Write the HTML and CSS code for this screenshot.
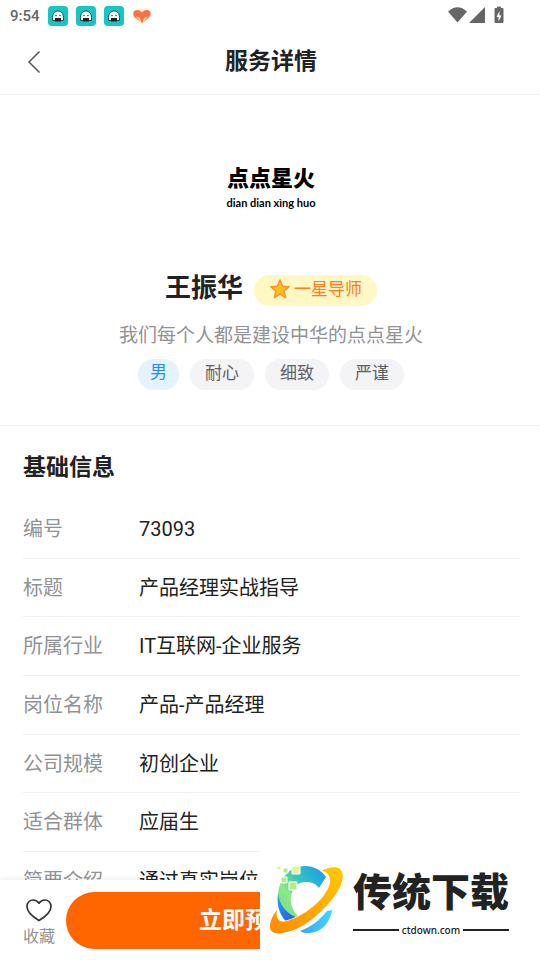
FILE: index.html
```html
<!DOCTYPE html>
<html lang="zh-CN">
<head>
<meta charset="utf-8">
<meta name="viewport" content="width=device-width, initial-scale=1">
<title>服务详情</title>
<link rel="stylesheet" href="styles.css">
</head>
<body>
<svg width="0" height="0" class="defs" aria-hidden="true">
  <symbol id="ghost" viewBox="0 0 20 20">
    <rect width="20" height="20" rx="4" fill="#18c5c5"/>
    <path d="M4.500 14.500V11.500C4.500 7.500 7 5 10 5s5.500 2.500 5.500 6.500v3z" fill="#fff" stroke="#173d40" stroke-width=".9"/>
    <circle cx="8" cy="9.500" r=".7" fill="#222"/><circle cx="12" cy="9.500" r=".7" fill="#222"/>
    <path d="M7 12h6v3.500H7z" fill="#222"/>
  </symbol>
</svg>
<div class="app">
  <div class="status">
    <span class="time">9:54</span>
    <svg class="app-icon"><use href="#ghost"/></svg>
    <svg class="app-icon"><use href="#ghost"/></svg>
    <svg class="app-icon"><use href="#ghost"/></svg>
    <svg class="app-icon" viewBox="0 0 20 20">
      <circle cx="10" cy="10" r="8" fill="#fff3df"/>
      <path d="M10 17L3 11.500C0 8.500 1 4 5 4c2.500 0 4 1 5 2.500C11 5 12.500 4 15 4c4 0 5 4.500 2 7.500z" fill="#ff7043"/>
      <path d="M9 17.500L8 14 4.500 11M11 17.500l1-3.500 3.500-3M8 14l-1.500-3M12 14l1.500-3" fill="none" stroke="#fff3df" stroke-width="1"/>
    </svg>
    <svg class="system" viewBox="0 0 58 20" aria-label="网络与电量">
      <path d="M0 5.500Q9.500-3 19 5.500L9.500 16.500z" fill="#666"/>
      <path d="M37 1v16H21z" fill="#666"/>
      <path d="M47 2.500h2.500V1h3v1.500H55v14h-8z" fill="#666" stroke="#666" stroke-linejoin="round"/>
      <path d="M51.500 5l-3 6h2v4.500l3-6h-2z" fill="#fff"/>
    </svg>
  </div>
  <header class="nav">
    <button class="back" aria-label="返回">
      <svg width="14" height="24" viewBox="0 0 14 24"><path d="M12.500 1.500L2 12l10.500 10.500" fill="none" stroke="#555" stroke-width="1.500"/></svg>
    </button>
    <h1 class="title">服务详情</h1>
  </header>
  <main class="content">
    <section class="profile">
      <div class="avatar">
        <span class="avatar-name">点点星火</span>
        <span class="avatar-pinyin">dian dian xìng huo</span>
      </div>
      <div class="identity">
        <h2 class="name">王振华</h2>
        <span class="badge">
          <svg width="20" height="20" viewBox="0 0 20 20"><path d="M10 1l2.500 6.300 6.700.4-5.200 4.300 1.700 6.600L10 14.900l-5.700 3.700L6 12 .8 7.700l6.700-.4z" fill="#ffc01e" stroke="#f7922d" stroke-width="1.500" stroke-linejoin="round"/></svg>
          一星导师
        </span>
      </div>
      <p class="motto">我们每个人都是建设中华的点点星火</p>
      <div class="tags">
        <span class="tag tag-gender">男</span>
        <span class="tag">耐心</span>
        <span class="tag">细致</span>
        <span class="tag">严谨</span>
      </div>
    </section>
    <section class="info">
      <h2 class="section-title">基础信息</h2>
      <dl class="list">
        <div class="row"><dt>编号</dt><dd>73093</dd></div>
        <div class="row"><dt>标题</dt><dd>产品经理实战指导</dd></div>
        <div class="row"><dt>所属行业</dt><dd>IT互联网-企业服务</dd></div>
        <div class="row"><dt>岗位名称</dt><dd>产品-产品经理</dd></div>
        <div class="row"><dt>公司规模</dt><dd>初创企业</dd></div>
        <div class="row"><dt>适合群体</dt><dd>应届生</dd></div>
        <div class="row"><dt>简要介绍</dt><dd>通过真实岗位</dd></div>
      </dl>
    </section>
  </main>
  <footer class="actions">
    <button class="favorite">
      <svg width="28" height="24" viewBox="0 0 28 24"><path d="M14 22.500C9 19.500 2 14.500 2 8.500 2 4.500 4.800 2 8 2c2.700 0 4.800 1.400 6 3.200C15.200 3.400 17.300 2 20 2c3.200 0 6 2.500 6 6.500 0 6-7 11-12 14z" fill="none" stroke="#333" stroke-width="1.700" stroke-linejoin="round"/></svg>
      <span>收藏</span>
    </button>
    <button class="book">立即预约</button>
  </footer>
</div>
<aside class="brand">
  <svg class="brand-mark" viewBox="0 0 74 70" aria-hidden="true">
    <defs>
      <linearGradient id="arc" x1="0" y1="1" x2="1" y2="0"><stop offset="0" stop-color="#6fd88c"/><stop offset=".35" stop-color="#8cea83"/><stop offset=".6" stop-color="#38c2bf"/><stop offset="1" stop-color="#1698ef"/></linearGradient>
      <linearGradient id="deep" x1="0" y1="0" x2="1" y2="1"><stop offset="0" stop-color="#2a9df2"/><stop offset="1" stop-color="#2450ea"/></linearGradient>
      <linearGradient id="low" x1="0" y1="0" x2="1" y2="0"><stop offset="0" stop-color="#3aa0fa"/><stop offset="1" stop-color="#40d8ff"/></linearGradient>
      <linearGradient id="ring" x1="0" y1="1" x2="1" y2="0"><stop offset="0" stop-color="#ff8a00"/><stop offset="1" stop-color="#ffc900"/></linearGradient>
    </defs>
    <path d="M56 11C51 4 44 0 35 0 19 0 8 14 8 31c0 11 8 20 18 24l4-3C24 47 20 39 21 31c1-9 7-15 15-15 6 0 10 2 13 6z" fill="url(#arc)"/>
    <path d="M8 27c1 12 9 22 23 26l-12 5C11 52 6 41 8 27z" fill="url(#deep)"/>
    <path d="M30 65c11-4 20-11 27-20l5-1c-2 14-12 24-26 23-2 0-4-1-6-2z" fill="url(#low)"/>
    <path d="M51 5C59 1 66 0 70 3c5 5 3 14-4 25C55 44 35 62 17 66 7 69 0 67 0 61c0-5 2-11 7-17-2 10 3 13 10 11 11-3 25-12 34-22 6-7 10-15 9-20-1-5-4-8-9-8z" fill="url(#ring)" stroke="#fff" stroke-width="1.400" paint-order="stroke"/>
    <g stroke="#fff"><path d="M22 0h8v8h-8zM7 0h4v4H7z" fill="#e4f39a"/><path d="M13 2h5v5h-5zM11 11h6v6h-6zM19 16h8v8h-8z" fill="#b7ea88"/></g>
  </svg>
  <div class="brand-copy">
    <strong class="brand-name">传统下载</strong>
    <span class="brand-url">ctdown.com</span>
  </div>
</aside>
</body>
</html>
```
FILE: styles.css
```css
* { box-sizing: border-box; }
body {
  margin: 0;
  background: #fff;
  color: #222;
  font-family: Roboto, "Noto Sans CJK SC", sans-serif;
}
h1, h2, p, dl, dd { margin: 0; }
button {
  padding: 0;
  border: 0;
  background: none;
  font-family: inherit;
}
svg { display: block; flex: none; }
.defs { position: absolute; }
.app {
  display: flex;
  flex-direction: column;
  height: 100vh;
}
.status {
  display: flex;
  align-items: center;
  gap: 8px;
  height: 32px;
  padding: 0 34px 0 10px;
}
.time {
  color: #666;
  font-size: 15px;
  font-weight: 500;
}
.app-icon { width: 20px; height: 20px; }
.system { width: 58px; height: 20px; margin-left: auto; }
.nav {
  display: grid;
  grid-template-columns: 48px 1fr 46px;
  align-items: center;
  height: 63px;
  padding-bottom: 2px;
  border-bottom: 1px solid #f0f0f2;
}
.back {
  display: flex;
  justify-content: center;
  padding-left: 20px;
}
.title {
  font-size: 23px;
  line-height: 32px;
  text-align: center;
}
.content {
  flex: 1;
  min-height: 0;
  overflow: hidden;
}
.profile {
  display: flex;
  flex-direction: column;
  align-items: center;
  padding: 36px 0 35px 2px;
  border-bottom: 1px solid #f0f0f2;
}
.avatar {
  display: flex;
  flex-direction: column;
  align-items: center;
  justify-content: center;
  width: 116px;
  height: 116px;
  border-radius: 50%;
  color: #000;
}
.avatar-name {
  font-size: 22px;
  font-weight: 900;
  line-height: 28px;
}
.avatar-pinyin {
  font-family: Lato, sans-serif;
  font-size: 11px;
  font-weight: 700;
  line-height: 20px;
}
.identity {
  display: flex;
  align-items: flex-end;
  gap: 11px;
  margin-top: 23px;
}
.name {
  font-size: 26px;
  line-height: 36px;
}
.badge {
  display: flex;
  align-items: center;
  gap: 4px;
  height: 31px;
  padding: 0 15px 4px 16px;
  border-radius: 16px;
  background: #fff8c4;
  color: #ff7d1a;
  font-size: 17px;
  line-height: 24px;
}
.motto {
  margin-top: 16px;
  color: #909296;
  font-size: 19px;
  line-height: 28px;
}
.tags {
  display: flex;
  gap: 11px;
  margin-top: 9px;
}
.tag {
  height: 31px;
  padding: 0 15px;
  border-radius: 16px;
  background: #f4f4f6;
  color: #606266;
  font-size: 17px;
  line-height: 28px;
}
.tag-gender {
  padding: 0 12px;
  background: #e3f3ff;
  color: #1e8fff;
  line-height: 26px;
}
.info { padding: 26px 20px 0 23px; }
.section-title {
  font-size: 23px;
  line-height: 32px;
}
.list { margin-top: 16px; }
.row {
  display: flex;
  height: 59px;
  border-bottom: 1px solid #f0f0f2;
  font-size: 20px;
  line-height: 58px;
}
.row:nth-child(3n+2) { height: 58px; }
.row dt { width: 116px; color: #909296; }
.actions {
  display: flex;
  align-items: center;
  gap: 11px;
  height: 80px;
  padding: 0 116px 0 23px;
  background: #fff;
  box-shadow: 0 -1px 5px rgba(0, 0, 0, 0.08);
  z-index: 1;
}
.favorite {
  display: flex;
  flex-direction: column;
  align-items: center;
  gap: 5px;
  width: 32px;
  padding-top: 4px;
  color: #909296;
  font-size: 16px;
  line-height: 20px;
}
.book {
  flex: 1;
  height: 57px;
  padding-bottom: 4px;
  border-radius: 29px;
  background: #ff6600;
  color: #fff;
  font-size: 23px;
  font-weight: 700;
}
.brand {
  position: fixed;
  right: 0;
  bottom: 0;
  z-index: 2;
  display: flex;
  align-items: center;
  gap: 9px;
  width: 280px;
  height: 109px;
  padding: 0 31px 10px 10px;
  background: #fff;
}
.brand-mark { width: 74px; height: 70px; }
.brand-copy {
  display: flex;
  flex: 1;
  flex-direction: column;
  padding-top: 4px;
}
.brand-name {
  font-size: 39px;
  font-weight: 900;
  line-height: 54px;
}
.brand-url {
  display: flex;
  align-items: center;
  gap: 3px;
  font-family: "Noto Sans", sans-serif;
  font-size: 10px;
  font-weight: 500;
  line-height: 20px;
}
.brand-url::before, .brand-url::after {
  content: "";
  flex: 1;
  height: 2px;
  background: #222;
}
```
